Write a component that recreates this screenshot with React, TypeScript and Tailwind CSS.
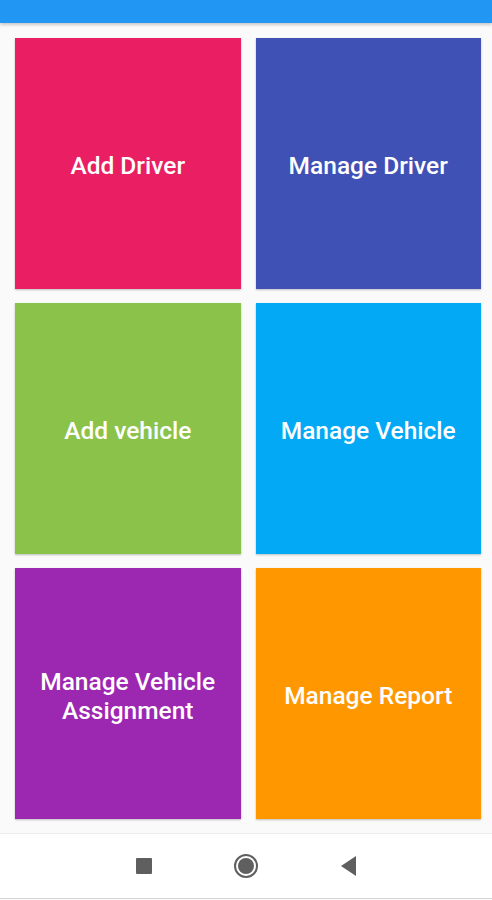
const tiles = [
  { label: "Add Driver", bg: "bg-[#e91e63]" },
  { label: "Manage Driver", bg: "bg-[#3f51b5]" },
  { label: "Add vehicle", bg: "bg-[#8bc34a]" },
  { label: "Manage Vehicle", bg: "bg-[#03a9f4]" },
  { label: "Manage Vehicle Assignment", bg: "bg-[#9c27b0]" },
  { label: "Manage Report", bg: "bg-[#ff9800]" },
];

export default function App() {
  return (
    <div
      className="w-[492px] h-[900px] flex flex-col bg-[#fafafa] overflow-hidden"
      style={{ fontFamily: "Roboto, 'Noto Sans', sans-serif" }}
    >
      <div className="h-[23px] shrink-0 bg-[#2196f3] shadow-[0_2px_3px_rgba(0,0,0,0.2)] z-10" />

      <div className="grid grid-cols-2 gap-x-[15px] gap-y-[14px] pt-[15px] pl-[15px] pr-[11px] pb-[14px]">
        {tiles.map((t) => (
          <button
            key={t.label}
            className={`${t.bg} h-[251px] flex items-center justify-center px-6 pt-[4px] text-center text-white text-[24.5px] leading-[29px] font-medium shadow-[0_1px_2px_rgba(0,0,0,0.25)]`}
          >
            {t.label}
          </button>
        ))}
      </div>

      <div className="flex-1 bg-white border-t border-[#ececec] border-b border-b-[#d6d6d6] flex items-center justify-center gap-[82px] mb-px">
        <div className="w-4 h-4 bg-[#5f5f5f] rounded-[1px]" />
        <div className="w-6 h-6 rounded-full border-2 border-[#5f5f5f] flex items-center justify-center">
          <div className="w-[16px] h-[16px] rounded-full bg-[#5f5f5f]" />
        </div>
        <svg width="16" height="20" viewBox="0 0 16 20">
          <path d="M16 0 L16 20 L1 10 Z" fill="#5f5f5f" />
        </svg>
      </div>
    </div>
  );
}
